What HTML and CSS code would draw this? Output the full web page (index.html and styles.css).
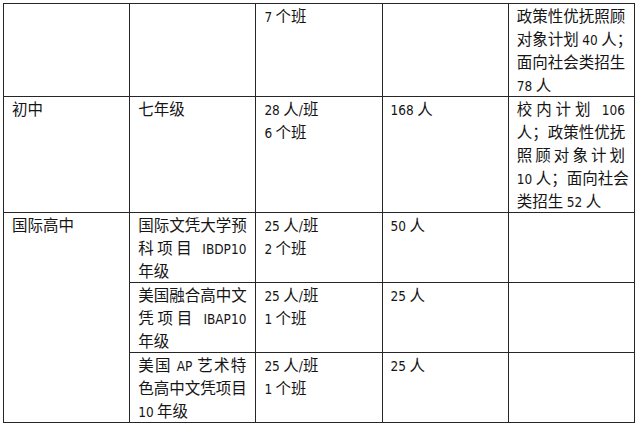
FILE: index.html
```html
<!DOCTYPE html>
<html lang="zh-CN">
<head>
<meta charset="utf-8">
<title>招生计划</title>
<link rel="stylesheet" href="styles.css">
</head>
<body>
<table class="plan">
  <colgroup>
    <col class="c"><col class="c"><col class="c"><col class="c"><col class="c">
  </colgroup>
  <tr>
    <td></td>
    <td></td>
    <td><span class="n">7</span> 个班</td>
    <td></td>
    <td>
      <div class="j">政策性优抚照顾</div>
      <div class="j">对象计划 <span class="n">40</span> 人；</div>
      <div class="j">面向社会类招生</div>
      <div><span class="n">78</span> 人</div>
    </td>
  </tr>
  <tr>
    <td>初中</td>
    <td>七年级</td>
    <td><div><span class="n">28</span> 人<span class="n">/</span>班</div><div><span class="n">6</span> 个班</div></td>
    <td><span class="n">168</span> 人</td>
    <td>
      <div class="j">校内计划 <span class="n">106</span></div>
      <div class="j">人；政策性优抚</div>
      <div class="j">照顾对象计划</div>
      <div class="j"><span class="n">10</span> 人；面向社会</div>
      <div>类招生 <span class="n">52</span> 人</div>
    </td>
  </tr>
  <tr>
    <td rowspan="3">国际高中</td>
    <td>
      <div class="j">国际文凭大学预</div>
      <div class="j">科项目 <span class="n">IBDP10</span></div>
      <div>年级</div>
    </td>
    <td><div><span class="n">25</span> 人<span class="n">/</span>班</div><div><span class="n">2</span> 个班</div></td>
    <td><span class="n">50</span> 人</td>
    <td></td>
  </tr>
  <tr>
    <td>
      <div class="j">美国融合高中文</div>
      <div class="j">凭项目 <span class="n">IBAP10</span></div>
      <div>年级</div>
    </td>
    <td><div><span class="n">25</span> 人<span class="n">/</span>班</div><div><span class="n">1</span> 个班</div></td>
    <td><span class="n">25</span> 人</td>
    <td></td>
  </tr>
  <tr>
    <td>
      <div class="j">美国 <span class="n">AP</span> 艺术特</div>
      <div class="j">色高中文凭项目</div>
      <div><span class="n">10</span> 年级</div>
    </td>
    <td><div><span class="n">25</span> 人<span class="n">/</span>班</div><div><span class="n">1</span> 个班</div></td>
    <td><span class="n">25</span> 人</td>
    <td></td>
  </tr>
</table>
</body>
</html>
```
FILE: styles.css
```css
html, body {
  margin: 0;
  padding: 0;
  background: #ffffff;
}

body {
  font-family: "Noto Sans CJK SC", "Noto Sans", sans-serif;
  font-size: 15.5px;
  line-height: 23px;
  color: #151515;
}

.plan {
  margin: 3px 0 0 3px;
  width: 632px;
  table-layout: fixed;
  border-collapse: collapse;
}

.plan .c {
  width: 20%;
}

.plan td {
  border: 1px solid #262626;
  padding: 0 9px 0 8px;
  vertical-align: top;
  text-align: left;
}

.plan td > div {
  height: 23px;
}

.j {
  white-space: nowrap;
  text-align: justify;
  text-align-last: justify;
}

.n {
  font-family: "DejaVu Sans Condensed", "DejaVu Sans", sans-serif;
  font-stretch: semi-condensed;
  font-size: 13.5px;
  line-height: 1;
}
```
